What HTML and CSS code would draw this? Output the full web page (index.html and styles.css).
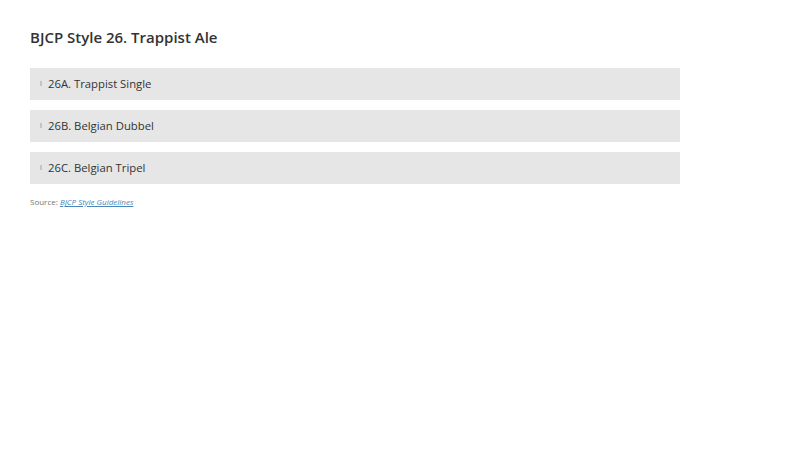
FILE: index.html
```html
<!DOCTYPE html>
<html>
<head>
<meta charset="utf-8">
<link rel="stylesheet" href="styles.css">
</head>
<body>
<div class="page">
  <h2 class="title">BJCP Style 26. Trappist Ale</h2>
  <div class="accordion">
    <div class="item"><span class="marker"></span><span class="label">26A. Trappist Single</span></div>
    <div class="item"><span class="marker"></span><span class="label">26B. Belgian Dubbel</span></div>
    <div class="item"><span class="marker"></span><span class="label">26C. Belgian Tripel</span></div>
  </div>
  <p class="source">Source: <a href="#">BJCP Style Guidelines</a></p>
</div>
</body>
</html>
```
FILE: styles.css
```css
html, body { margin: 0; padding: 0; background: #fff; }
body { font-family: "Open Sans", "Liberation Sans", sans-serif; color: #333; }
.page { padding: 25px 30px 0 30px; width: 650px; }
.title { margin: 0; font-size: 15px; font-weight: 600; line-height: 24px; color: #333; }
.accordion { margin-top: 19px; display: flex; flex-direction: column; gap: 10px; }
.item { height: 32px; box-sizing: border-box; padding-bottom: 2px; background: #e6e6e6; display: flex; align-items: center; padding-left: 10px; }
.marker { width: 2px; height: 5px; background: #c4c4c4; margin-right: 6px; margin-top: 1px; }
.label { font-size: 11.3px; color: #333; }
.source { margin: 12px 0 0 0; font-size: 8px; color: #777; line-height: 12px; }
.source a { color: #4a86b8; font-style: italic; text-decoration: underline; }
```
